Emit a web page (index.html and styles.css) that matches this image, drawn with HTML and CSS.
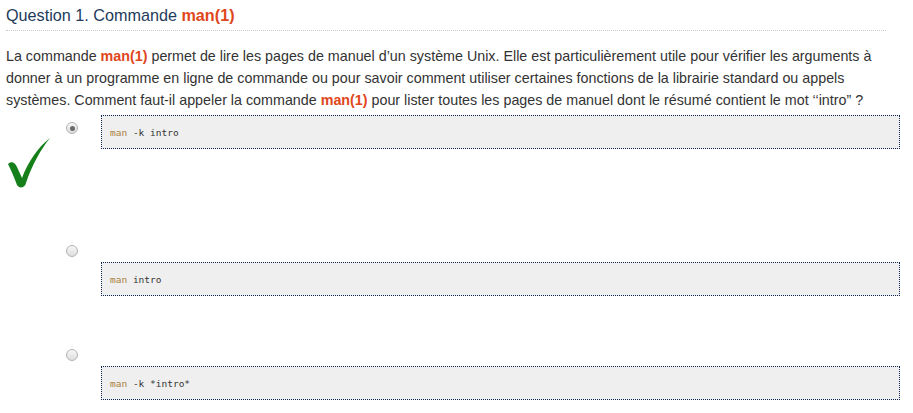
FILE: index.html
```html
<!DOCTYPE html>
<html lang="fr">
<head>
<meta charset="utf-8">
<title>Question 1</title>
<link rel="stylesheet" href="styles.css">
</head>
<body>
<div class="question">
  <h3 class="title">Question 1. Commande <strong class="cmd">man(1)</strong></h3>
  <p class="text">La commande <strong class="cmd">man(1)</strong> permet de lire les pages de manuel d’un système Unix. Elle est particulièrement utile pour vérifier les arguments à donner à un programme en ligne de commande ou pour savoir comment utiliser certaines fonctions de la librairie standard ou appels systèmes. Comment faut-il appeler la commande <strong class="cmd">man(1)</strong> pour lister toutes les pages de manuel dont le résumé contient le mot ‘‘intro” ?</p>

  <div class="answer answer-first">
    <svg class="mark" width="44" height="52" viewBox="0 0 44 52" aria-hidden="true">
      <path d="M2,27 C5,24 9,25 11,30 L16,41 C22,25 32,10 44,1 C35,12 26,28 20,46 C19,51 13,52 11,48 C8,40 5,33 2,27 Z" fill="#15801a"/>
    </svg>
    <span class="radio checked"></span>
    <div class="code"><span class="kw">man</span> -k intro</div>
  </div>

  <div class="answer">
    <span class="radio"></span>
    <div class="code below"><span class="kw">man</span> intro</div>
  </div>

  <div class="answer answer-last">
    <span class="radio"></span>
    <div class="code below"><span class="kw">man</span> -k *intro*</div>
  </div>
</div>
</body>
</html>
```
FILE: styles.css
```css
html, body {
  margin: 0;
  padding: 0;
  background: #ffffff;
}

body {
  font-family: "Liberation Sans", Arial, sans-serif;
}

.question {
  width: 894px;
  margin-left: 6px;
}

.title {
  width: 880px;
  margin: 0;
  padding-top: 6px;
  padding-bottom: 5px;
  font-size: 16.2px;
  font-weight: normal;
  line-height: 19px;
  color: #233b5a;
  border-bottom: 1px dotted #cccccc;
}

.cmd {
  color: #e0461b;
  font-weight: bold;
}

.text {
  width: 880px;
  margin: 14px 0 4px 0;
  font-size: 14.3px;
  line-height: 22px;
  color: #333333;
}

.answer {
  display: grid;
  grid-template-columns: 60px 35px 1fr;
  row-gap: 5px;
  margin-bottom: 53px;
}

.answer-first {
  margin-bottom: 56px;
}

.answer-last {
  margin-bottom: 0;
}

.mark {
  grid-column: 1;
  grid-row: 1;
  margin-top: 22px;
}

.radio {
  grid-column: 2;
  grid-row: 1;
  box-sizing: border-box;
  width: 12px;
  height: 12px;
  border: 1px solid #b4b4b4;
  border-radius: 50%;
  background: linear-gradient(#f6f6f6, #dedede);
  display: flex;
  align-items: center;
  justify-content: center;
}

.answer-first .radio {
  margin-top: 7px;
}

.radio.checked::after {
  content: "";
  width: 5px;
  height: 5px;
  border-radius: 50%;
  background: #6a6a6a;
}

.code {
  grid-column: 3;
  grid-row: 1;
  box-sizing: border-box;
  height: 34px;
  padding: 0 8px;
  display: flex;
  align-items: center;
  background: #efefef;
  border: 1px dotted #0b2450;
  font-family: "DejaVu Sans Mono", "Liberation Mono", monospace;
  font-size: 9.5px;
  color: #333333;
  white-space: pre;
}

.code.below {
  grid-row: 2;
}

.kw {
  color: #a9813f;
}
```
